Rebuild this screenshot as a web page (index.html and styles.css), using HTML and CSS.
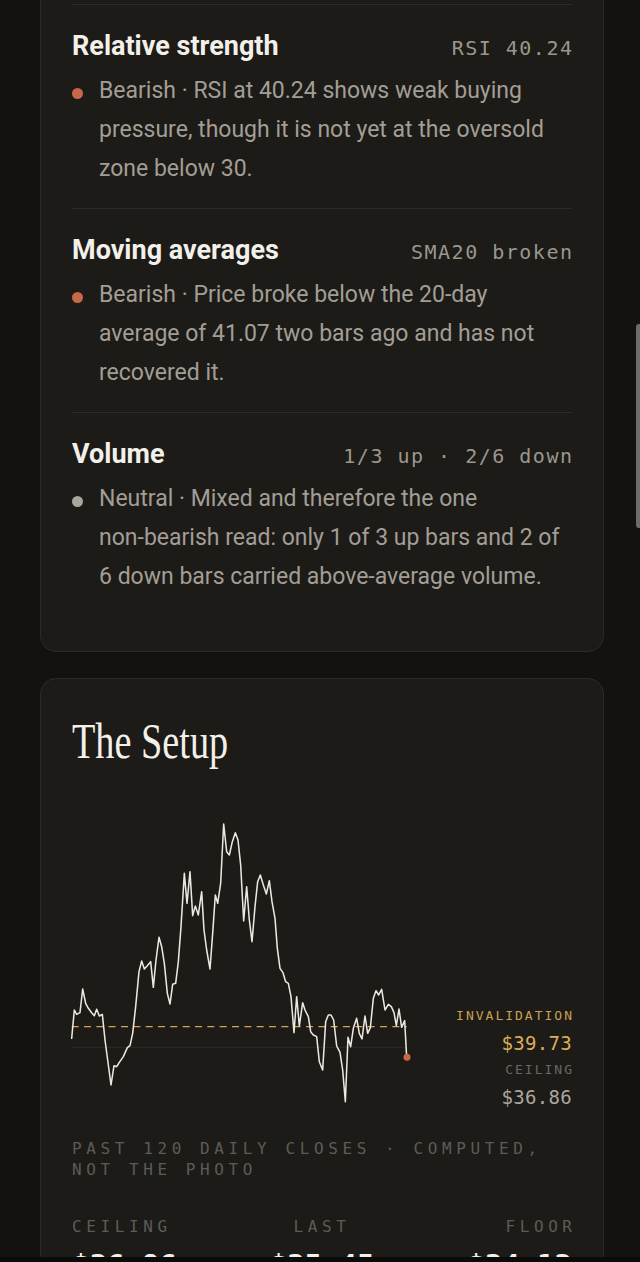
FILE: index.html
```html
<!DOCTYPE html>
<html lang="en">
<head>
<meta charset="utf-8">
<title>Signals</title>
<link rel="stylesheet" href="styles.css">
</head>
<body>
<main class="page">
  <section class="card card-signals">
    <div class="signal">
      <div class="signal-head">
        <h3 class="signal-title">Relative strength</h3>
        <span class="signal-metric">RSI 40.24</span>
      </div>
      <div class="signal-body">
        <span class="dot dot-bear"></span>
        <p class="signal-text">Bearish · RSI at 40.24 shows weak buying pressure, though it is not yet at the oversold zone below 30.</p>
      </div>
    </div>
    <div class="signal">
      <div class="signal-head">
        <h3 class="signal-title">Moving averages</h3>
        <span class="signal-metric">SMA20 broken</span>
      </div>
      <div class="signal-body">
        <span class="dot dot-bear"></span>
        <p class="signal-text">Bearish · Price broke below the 20-day average of 41.07 two bars ago and has not recovered it.</p>
      </div>
    </div>
    <div class="signal">
      <div class="signal-head">
        <h3 class="signal-title">Volume</h3>
        <span class="signal-metric">1/3 up · 2/6 down</span>
      </div>
      <div class="signal-body">
        <span class="dot dot-neutral"></span>
        <p class="signal-text">Neutral · Mixed and therefore the one <span class="nowrap">non-bearish</span> read: only 1 of 3 up bars and 2 of 6 down bars carried above-average volume.</p>
      </div>
    </div>
  </section>

  <section class="card card-setup">
    <h2 class="setup-title">The Setup</h2>
    <div class="chart-row">
      <svg class="chart" viewBox="96 45 1008 885" width="336" height="295" aria-hidden="true">
        <line x1="95" y1="742" x2="1100" y2="742" class="base-line"/>
        <line x1="95" y1="680" x2="1100" y2="680" class="inval-line"/>
        <polyline class="price-line" points="95,715 103,630 110,643 120,638 128,567 137,610 145,625 155,638 163,647 170,628 178,648 187,643 195,720 203,780 213,855 222,797 230,800 238,787 250,770 262,743 270,737 278,700 287,620 297,515 305,483 313,507 322,497 332,485 340,562 348,480 357,412 365,440 373,490 382,580 390,612 398,553 407,550 415,485 423,380 433,220 441,310 450,215 458,347 466,318 475,345 485,275 492,390 500,450 510,507 518,400 526,285 533,310 542,250 551,72 560,155 568,165 577,125 586,98 594,120 602,195 611,363 620,260 628,360 636,425 645,320 653,245 661,225 670,255 679,282 688,242 696,305 705,355 712,445 720,505 729,518 737,545 745,550 753,590 762,698 770,590 778,678 788,608 795,630 805,650 812,695 820,705 830,710 838,785 848,810 857,665 865,645 873,645 881,660 890,738 900,757 908,810 916,905 924,712 932,740 940,685 950,655 958,700 966,717 975,648 983,700 991,683 1000,595 1008,572 1016,585 1025,568 1035,630 1045,613 1054,620 1062,638 1069,677 1077,627 1085,682 1094,662 1100,772"/>
        <circle cx="1101" cy="772" r="10.5" class="last-dot"/>
      </svg>
      <div class="levels">
        <span class="level-label level-gold">INVALIDATION</span>
        <span class="level-value level-gold-val">$39.73</span>
        <span class="level-label">CEILING</span>
        <span class="level-value">$36.86</span>
      </div>
    </div>
    <p class="caption">PAST 120 DAILY CLOSES · COMPUTED, NOT THE PHOTO</p>
    <div class="stats">
      <div class="stat stat-left">
        <span class="stat-label">CEILING</span>
        <span class="stat-value">$36.86</span>
      </div>
      <div class="stat stat-mid">
        <span class="stat-label">LAST</span>
        <span class="stat-value">$35.45</span>
      </div>
      <div class="stat stat-right">
        <span class="stat-label">FLOOR</span>
        <span class="stat-value">$34.12</span>
      </div>
    </div>
  </section>
</main>
<div class="scroll-thumb"></div>
<div class="nav-strip"></div>
</body>
</html>
```

FILE: styles.css
```css
html, body {
  margin: 0;
  padding: 0;
  background: #131211;
  overflow: hidden;
}

body {
  font-family: Roboto, "Liberation Sans", sans-serif;
  color: #a39e95;
}

.page {
  display: flex;
  flex-direction: column;
  gap: 26px;
  padding: 0 36px 0 40px;
}

.card {
  background: #1c1b18;
  border: 1px solid #2c2a27;
  border-radius: 16px;
  padding: 31px 31px 35px;
}

.card-signals {
  margin-top: -28px;
}

.signal {
  border-top: 1px solid #2e2c29;
  padding: 26px 0 20px;
}

.signal-head {
  display: flex;
  justify-content: space-between;
  align-items: baseline;
}

.signal-title {
  margin: 0;
  font-family: Roboto, "Liberation Sans", sans-serif;
  font-weight: 700;
  font-size: 27px;
  line-height: 30px;
  color: #f3f0ea;
}

.signal-metric {
  font-family: "DejaVu Sans Mono", monospace;
  font-size: 20px;
  letter-spacing: 1.5px;
  margin-right: -1.5px;
  color: #9b968e;
  white-space: pre;
}

.signal-body {
  display: flex;
  align-items: flex-start;
  gap: 16px;
  margin-top: 10px;
}

.dot {
  flex: 0 0 11px;
  width: 11px;
  height: 11px;
  border-radius: 50%;
  margin-top: 17px;
}

.dot-bear { background: #c8674a; }
.dot-neutral { background: #aaa59c; }

.signal-text {
  margin: 0;
  font-size: 23px;
  line-height: 39px;
  color: #a39e95;
}

.nowrap {
  white-space: nowrap;
}

.card-setup {
  padding-bottom: 40px;
}

.setup-title {
  margin: 6px 0 0;
  font-family: "Liberation Serif", serif;
  font-weight: 400;
  font-size: 51px;
  line-height: 51px;
  color: #f3f0ea;
  transform: scaleX(0.75);
  transform-origin: left center;
}

.chart-row {
  display: flex;
  justify-content: space-between;
  align-items: flex-end;
  margin-top: 48px;
}

.chart {
  display: block;
  overflow: visible;
}

.price-line {
  fill: none;
  stroke: #ece8e0;
  stroke-width: 4.6;
  stroke-linejoin: round;
  stroke-linecap: round;
}

.inval-line {
  stroke: #d6a24a;
  stroke-width: 3.6;
  stroke-dasharray: 21 16;
}

.base-line {
  stroke: #2d2b28;
  stroke-width: 3;
}

.last-dot {
  fill: #c8674a;
}

.levels {
  display: flex;
  flex-direction: column;
  align-items: flex-end;
  gap: 5px;
  font-family: "DejaVu Sans Mono", monospace;
}

.level-label {
  font-size: 13px;
  line-height: 18px;
  letter-spacing: 2px;
  margin-right: -2px;
  color: #6a6761;
}

.level-gold {
  color: #c9a050;
}

.level-value {
  font-size: 19px;
  line-height: 26px;
  letter-spacing: 0.3px;
  color: #aaa69e;
}

.level-gold-val {
  color: #dcae55;
}

.caption {
  margin: 28px 0 0;
  font-family: "DejaVu Sans Mono", monospace;
  font-size: 16px;
  line-height: 21px;
  letter-spacing: 4.6px;
  color: #5e5b56;
}

.stats {
  display: flex;
  justify-content: space-between;
  margin-top: 36px;
  font-family: "DejaVu Sans Mono", monospace;
}

.stat {
  display: flex;
  flex-direction: column;
  gap: 11px;
  flex: 1 1 0;
}

.stat-left { align-items: flex-start; }
.stat-mid { align-items: center; }
.stat-right { align-items: flex-end; }

.stat-label {
  font-size: 16px;
  line-height: 21px;
  letter-spacing: 4.6px;
  color: #5e5b56;
}

.stat-right .stat-label { margin-right: -4.6px; }

.stat-value {
  font-size: 29px;
  line-height: 34px;
  font-weight: 700;
  color: #f3f0ea;
}

.scroll-thumb {
  position: fixed;
  right: 0;
  top: 324px;
  width: 4px;
  height: 204px;
  background: #6c6c6c;
  border-radius: 3px 0 0 3px;
}

.nav-strip {
  position: fixed;
  left: 0;
  right: 0;
  bottom: 0;
  height: 5px;
  background: #0b0b0b;
}
```
